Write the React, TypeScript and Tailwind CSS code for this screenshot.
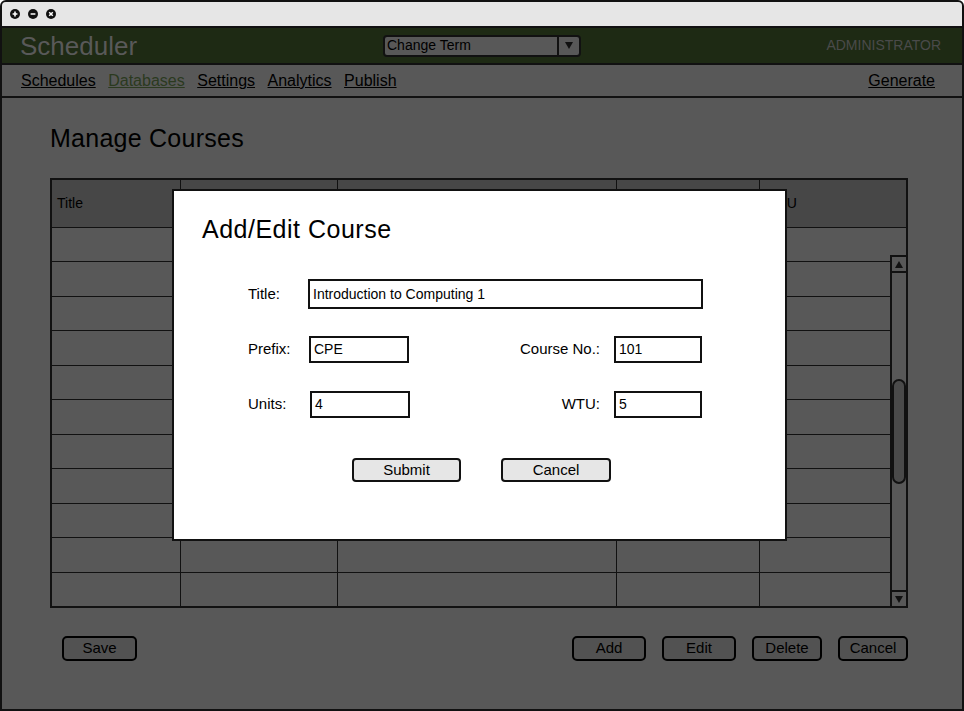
import React from 'react';

const font = "font-['Liberation_Sans',Arial,sans-serif]";
const cols = 'grid grid-cols-[128px_157px_279px_143px_1fr]';

function WinDot({ kind }: { kind: 'plus' | 'minus' | 'close' }) {
  return (
    <svg width="10" height="10" viewBox="0 0 10 10">
      <circle cx="5" cy="5" r="5" fill="#111" />
      {kind === 'plus' && <path d="M2.6 5h4.8M5 2.6v4.8" stroke="#fff" strokeWidth="1.6" />}
      {kind === 'minus' && <path d="M2.6 5h4.8" stroke="#fff" strokeWidth="1.6" />}
      {kind === 'close' && <path d="M3.2 3.2l3.6 3.6M6.8 3.2l-3.6 3.6" stroke="#fff" strokeWidth="1.5" />}
    </svg>
  );
}

function Triangle({ down }: { down?: boolean }) {
  return (
    <svg width="8" height="7" viewBox="0 0 8 7">
      <polygon points={down ? '0,0 8,0 4,7' : '4,0 8,7 0,7'} fill="#111" />
    </svg>
  );
}

function DimButton({ label, w }: { label: string; w: string }) {
  return (
    <div
      className={`${w} h-[25px] flex items-center justify-center rounded-[5px] border-2 border-black bg-[#525252] text-[15px] text-black`}
    >
      {label}
    </div>
  );
}

function Field({ value, w, h }: { value: string; w: string; h: string }) {
  return (
    <div className={`${w} ${h} flex items-center border-2 border-[#111] bg-white pl-[3px] text-[14px] text-black`}>
      {value}
    </div>
  );
}

export default function App() {
  const headers = ['Title', 'Prefix', 'Course No.', 'Units', 'WTU'];
  const rows = Array.from({ length: 11 }, (_, i) => i);

  return (
    <div
      className={`relative w-[964px] h-[711px] flex flex-col border-2 border-[#111] rounded-t-[6px] overflow-hidden bg-[#585858] ${font}`}
    >
      {/* Window chrome */}
      <div className="h-[24px] shrink-0 flex items-center gap-[8px] pl-[8px] bg-[#e6e6e6]">
        <WinDot kind="plus" />
        <WinDot kind="minus" />
        <WinDot kind="close" />
      </div>

      {/* App header */}
      <div className="h-[39px] shrink-0 grid grid-cols-[1fr_auto_1fr] items-center border-y-2 border-[#111] bg-[#1e2a14]">
        <div className="pl-[18px] text-[26px] leading-none text-[#595959]">Scheduler</div>
        <div className="w-[198px] h-[22px] flex rounded-[4px] border-2 border-[#111] bg-[#585858]">
          <div className="flex-1 flex items-center pl-[2px] text-[14px] text-black">Change Term</div>
          <div className="w-[22px] flex items-center justify-center border-l-2 border-[#111]">
            <Triangle down />
          </div>
        </div>
        <div className="pr-[21px] text-right text-[14px] text-[#4a4a4a]">ADMINISTRATOR</div>
      </div>

      {/* Nav */}
      <div className="h-[33px] shrink-0 flex items-center justify-between border-b-2 border-[#111] pl-[19px] pr-[27px] text-[16px]">
        <div className="flex items-center gap-[12.5px]">
          <span className="underline text-black">Schedules</span>
          <span className="underline text-[#2b3a1f]">Databases</span>
          <span className="underline text-black">Settings</span>
          <span className="underline text-black">Analytics</span>
          <span className="underline text-black">Publish</span>
        </div>
        <span className="underline text-black">Generate</span>
      </div>

      {/* Main */}
      <div className="flex-1 flex flex-col pl-[48px] pr-[54px] pt-[26px]">
        <h1 className="h-[28px] text-[25px] leading-[28px] tracking-[0.25px] text-black">Manage Courses</h1>

        <div className="mt-[26px] h-[430px] flex flex-col border-2 border-[#111]">
          <div className={`${cols} h-[48px] shrink-0 border-b border-[#111] bg-[#474747] text-[14px] text-black`}>
            {headers.map((h, i) => (
              <div key={h} className={`flex items-center pl-[5px] ${i > 0 ? 'border-l border-[#111]' : ''}`}>
                {h}
              </div>
            ))}
          </div>
          <div className="flex-1 flex">
            <div className="flex-1 flex flex-col divide-y divide-[#111]">
              {rows.map((r) => (
                <div key={r} className={`${cols} flex-1`}>
                  {headers.map((h, i) => (
                    <div key={h} className={i > 0 ? 'border-l border-[#111]' : ''} />
                  ))}
                </div>
              ))}
            </div>
            {/* Scrollbar */}
            <div className="w-[16px] pt-[27px] flex flex-col">
              <div className="flex-1 flex flex-col border-l-2 border-t-2 border-[#111]">
                <div className="h-[16px] flex items-center justify-center border-b-2 border-[#111]">
                  <Triangle />
                </div>
                <div className="flex-1">
                  <div className="mt-[106px] h-[105px] rounded-full border-2 border-[#111] bg-[#4a4a4a]" />
                </div>
                <div className="h-[16px] flex items-center justify-center border-t-2 border-[#111]">
                  <Triangle down />
                </div>
              </div>
            </div>
          </div>
        </div>

        <div className="mt-[28px] flex items-center justify-between pl-[12px]">
          <DimButton label="Save" w="w-[75px]" />
          <div className="flex items-center gap-[16px]">
            <DimButton label="Add" w="w-[74px]" />
            <DimButton label="Edit" w="w-[74px]" />
            <DimButton label="Delete" w="w-[70px]" />
            <DimButton label="Cancel" w="w-[70px]" />
          </div>
        </div>
      </div>

      {/* Modal dialog */}
      <div className="absolute left-[170px] top-[187px] w-[615px] h-[352px] flex flex-col border-2 border-[#111] bg-white pt-[24px] text-black">
        <h2 className="h-[28px] pl-[28px] text-[25px] leading-[28px] tracking-[0.5px]">Add/Edit Course</h2>
        <div className="mt-[36px] pl-[74px] flex flex-col text-[15px]">
          <div className="h-[30px] flex items-center">
            <span className="w-[60px]">Title:</span>
            <Field value="Introduction to Computing 1" w="w-[395px]" h="h-[30px]" />
          </div>
          <div className="mt-[27px] h-[27px] flex items-center">
            <span className="w-[61px]">Prefix:</span>
            <Field value="CPE" w="w-[100px]" h="h-[27px]" />
            <span className="w-[191px] text-right">Course No.:</span>
            <div className="ml-[14px]">
              <Field value="101" w="w-[88px]" h="h-[27px]" />
            </div>
          </div>
          <div className="mt-[28px] h-[27px] flex items-center">
            <span className="w-[62px]">Units:</span>
            <Field value="4" w="w-[100px]" h="h-[27px]" />
            <span className="w-[190px] text-right">WTU:</span>
            <div className="ml-[14px]">
              <Field value="5" w="w-[88px]" h="h-[27px]" />
            </div>
          </div>
          <div className="mt-[40px] ml-[104px] flex items-center gap-[40px]">
            <div className="w-[109px] h-[24px] flex items-center justify-center rounded-[4px] border-2 border-[#111] bg-[#e6e6e6]">
              Submit
            </div>
            <div className="w-[110px] h-[24px] flex items-center justify-center rounded-[4px] border-2 border-[#111] bg-[#e6e6e6]">
              Cancel
            </div>
          </div>
        </div>
      </div>
    </div>
  );
}
